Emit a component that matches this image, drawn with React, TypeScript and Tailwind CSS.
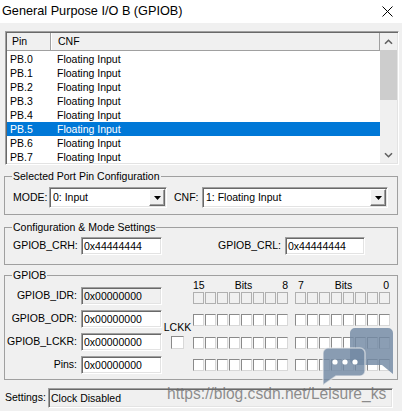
const pins = ["PB.0", "PB.1", "PB.2", "PB.3", "PB.4", "PB.5", "PB.6", "PB.7"];
const regs = ["GPIOB_IDR:", "GPIOB_ODR:", "GPIOB_LCKR:", "Pins:"];

const sunken =
  "border border-t-[#a0a0a0] border-l-[#a0a0a0] border-b-white border-r-white shadow-[inset_1px_1px_0_#696969,inset_-1px_-1px_0_#e3e3e3]";

function TextBox(props: { w: string; h?: string; value: string; readOnly?: boolean }) {
  const { w, h = "h-[18px]", value, readOnly } = props;
  return (
    <div
      className={`${w} ${h} ${sunken} ${readOnly ? "bg-[#f0f0f0]" : "bg-white"} flex items-center pl-[2px] leading-none whitespace-nowrap`}
    >
      {value}
    </div>
  );
}

function Combo(props: { w: string; value: string }) {
  return (
    <div className={`${props.w} h-[21px] ${sunken} bg-white flex items-center p-[1px]`}>
      <span className="flex-1 pl-[2px] leading-none">{props.value}</span>
      <div className="w-[16px] h-[17px] bg-[#f0f0f0] border border-t-white border-l-white border-b-[#696969] border-r-[#696969] shadow-[inset_-1px_-1px_0_#a0a0a0] flex items-center justify-center">
        <svg width="7" height="4" viewBox="0 0 7 4">
          <path d="M0 0H7L3.5 4Z" fill="#000" />
        </svg>
      </div>
    </div>
  );
}

function Chevron(props: { down?: boolean }) {
  return (
    <svg width="9" height="6" viewBox="0 0 9 6">
      <path
        d={props.down ? "M1 1.2L4.5 4.7L8 1.2" : "M1 4.8L4.5 1.3L8 4.8"}
        fill="none"
        stroke="#606060"
        strokeWidth="1.6"
      />
    </svg>
  );
}

function BitRow(props: { disabled?: boolean; className?: string }) {
  const box = props.disabled
    ? "bg-[#f0f0f0] border border-[#b0b0b0]"
    : "bg-white border border-t-[#8a8a8a] border-l-[#8a8a8a] border-b-[#d8d8d8] border-r-[#d8d8d8]";
  const group = (
    <div className="flex gap-[1px]">
      {Array.from({ length: 8 }).map((_, i) => (
        <div key={i} className={`w-[11px] h-[12px] ${box}`} />
      ))}
    </div>
  );
  return (
    <div className={`flex gap-[7px] ${props.className ?? ""}`}>
      {group}
      {group}
    </div>
  );
}

export default function App() {
  return (
    <div className="relative w-[402px] h-[411px] overflow-hidden bg-[#f0f0f0] text-black text-[10.5px] font-['Liberation_Sans',Arial,sans-serif]">
      {/* title bar */}
      <div className="h-[23px] bg-white flex items-center pl-[2px]">
        <span className="text-[12.7px] leading-none">General Purpose I/O B (GPIOB)</span>
        <svg className="ml-auto mr-[9px]" width="11" height="11" viewBox="0 0 11 11">
          <path d="M0.5 0.5L10.5 10.5M10.5 0.5L0.5 10.5" stroke="#000" strokeWidth="1" />
        </svg>
      </div>

      <div className="px-[4px]">
        {/* pin list */}
        <div className={`ml-[1px] mt-[8px] w-[394px] h-[134px] ${sunken} bg-white p-[1px] flex overflow-hidden`}>
          <div className="flex-1 flex flex-col">
            <div className="h-[18px] shrink-0 flex bg-[#f0f0f0] border-b border-[#a0a0a0] border-r border-r-[#a0a0a0] leading-[17px]">
              <div className="w-[44px] pl-[5px] border-r border-[#a0a0a0]">Pin</div>
              <div className="pl-[6px] border-l border-white">CNF</div>
            </div>
            <div className="pt-[1px]">
              {pins.map((p) => (
                <div
                  key={p}
                  className={`h-[14px] leading-[14px] pl-[3px] flex ${p === "PB.5" ? "bg-[#0078d7] text-white" : ""}`}
                >
                  <span className="w-[47px]">{p}</span>
                  <span>Floating Input</span>
                </div>
              ))}
            </div>
          </div>
          <div className="w-[17px] bg-[#f0f0f0] flex flex-col">
            <div className="h-[17px] flex items-center justify-center">
              <Chevron />
            </div>
            <div className="h-[50px] bg-[#cdcdcd]" />
            <div className="flex-1" />
            <div className="h-[17px] flex items-center justify-center">
              <Chevron down />
            </div>
          </div>
        </div>

        {/* pin configuration */}
        <fieldset className="mt-[5px] w-[394px] border border-[#a0a0a0] px-[7px] pt-[5px] pb-[6px]">
          <legend className="px-[1px] leading-[12px]">Selected Port Pin Configuration</legend>
          <div className="flex items-center">
            <span className="w-[37px] pl-[1px]">MODE:</span>
            <Combo w="w-[118px]" value="0: Input" />
            <span className="ml-[7px] w-[28px]">CNF:</span>
            <Combo w="w-[186px]" value="1: Floating Input" />
          </div>
        </fieldset>

        {/* configuration registers */}
        <fieldset className="mt-[6px] w-[394px] border border-[#a0a0a0] px-[7px] pt-[4px] pb-[9px]">
          <legend className="px-[1px] leading-[12px]">Configuration &amp; Mode Settings</legend>
          <div className="flex items-center">
            <span className="w-[69px] pl-[1px]">GPIOB_CRH:</span>
            <TextBox w="w-[81px]" value="0x44444444" />
            <span className="ml-[56px] w-[67px]">GPIOB_CRL:</span>
            <TextBox w="w-[80px]" value="0x44444444" />
          </div>
        </fieldset>

        {/* port registers */}
        <fieldset className="mt-[4px] w-[394px] border border-[#a0a0a0] px-[7px] pt-[6px] pb-[5px]">
          <legend className="px-[1px] leading-[12px]">GPIOB</legend>
          <div className="flex">
            <div className="flex flex-col gap-[5px]">
              {regs.map((r) => (
                <div key={r} className="flex items-center h-[18px]">
                  <div className="w-[65px] flex justify-end whitespace-nowrap">{r}</div>
                  <div className="ml-[4px]">
                    <TextBox w="w-[81px]" value="0x00000000" readOnly={r === "GPIOB_IDR:"} />
                  </div>
                </div>
              ))}
            </div>
            <div className="w-[31px] flex flex-col items-center pt-[34px]">
              <span className="leading-[12px]">LCKK</span>
              <div className="mt-[3px] w-[13px] h-[13px] bg-white border border-t-[#8a8a8a] border-l-[#8a8a8a] border-b-[#d8d8d8] border-r-[#d8d8d8]" />
            </div>
            <div className="-mt-[7px] flex flex-col">
              <div className="h-[11px] leading-[11px] flex gap-[7px]">
                <div className="w-[95px] flex justify-between">
                  <span>15</span>
                  <span>Bits</span>
                  <span>8</span>
                </div>
                <div className="w-[95px] flex justify-between pl-[3px] pr-[1px]">
                  <span>7</span>
                  <span>Bits</span>
                  <span>0</span>
                </div>
              </div>
              <BitRow disabled className="mt-[1px]" />
              <BitRow className="mt-[10px]" />
              <BitRow className="mt-[11px]" />
              <BitRow className="mt-[10px]" />
            </div>
          </div>
        </fieldset>

        <div className="mt-[8px] flex items-center">
          <span className="w-[44px] pl-[1px]">Settings:</span>
          <TextBox w="w-[345px]" h="h-[20px]" value="Clock Disabled" readOnly />
        </div>
      </div>

      {/* blog watermark */}
      <svg className="absolute left-[318px] top-[324px]" width="80" height="64" viewBox="0 0 80 64">
        <g fill="#7189a3" fillOpacity="0.82">
          <path d="M37 4H70a5 5 0 0 1 5 5V50L64 41H37a5 5 0 0 1-5-5V9a5 5 0 0 1 5-5Z" />
          <path
            d="M10 24H42a5 5 0 0 1 5 5V47a5 5 0 0 1-5 5H18L5 61V29a5 5 0 0 1 5-5Z"
            stroke="#f0f0f0"
            strokeOpacity="0.6"
            strokeWidth="1.5"
          />
        </g>
        <g fill="#fff">
          <circle cx="17" cy="38" r="2.6" />
          <circle cx="27" cy="38" r="2.6" />
          <circle cx="37" cy="38" r="2.6" />
        </g>
      </svg>
      <div className="absolute left-[167px] top-[386px] text-[15.6px] leading-[16px] text-[#6a6a6a]/75 whitespace-nowrap">
        https://blog.csdn.net/Leisure_ks
      </div>
    </div>
  );
}
